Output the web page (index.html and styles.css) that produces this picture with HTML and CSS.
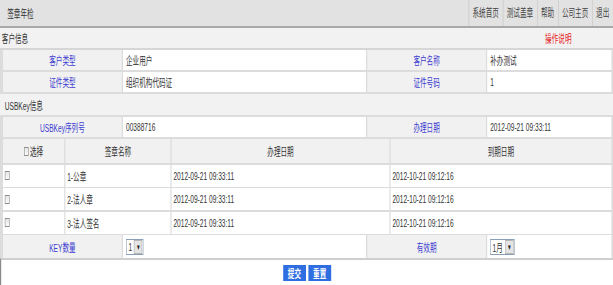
FILE: index.html
```html
<!DOCTYPE html>
<html lang="zh-CN">
<head>
  <meta charset="UTF-8">
  <meta name="viewport" content="width=device-width, initial-scale=1.0">
  <title>签章年检</title>
  <link rel="stylesheet" href="styles.css">
</head>
<body>
<div class="frame">
<div class="page">

  <div class="topbar">
    <div class="title">签章年检</div>
    <ul class="nav">
      <li>系统首页</li>
      <li>测试盖章</li>
      <li>帮助</li>
      <li>公司主页</li>
      <li>退出</li>
    </ul>
  </div>

  <div class="bar">
    <span>客户信息</span>
    <a class="help">操作说明</a>
  </div>

  <div class="form-grid">
    <div class="label">客户类型</div>
    <div class="value">企业用户</div>
    <div class="label">客户名称</div>
    <div class="value">补办测试</div>

    <div class="label">证件类型</div>
    <div class="value">组织机构代码证</div>
    <div class="label">证件号码</div>
    <div class="value">1</div>
  </div>

  <div class="bar sub">
    <span>USBKey信息</span>
  </div>

  <div class="form-grid single">
    <div class="label">USBKey序列号</div>
    <div class="value">00388716</div>
    <div class="label">办理日期</div>
    <div class="value">2012-09-21 09:33:11</div>
  </div>

  <div class="list">
    <div class="head"><input type="checkbox" class="chk"> 选择</div>
    <div class="head">签章名称</div>
    <div class="head">办理日期</div>
    <div class="head">到期日期</div>

    <div class="cell"><input type="checkbox" class="chk"></div>
    <div class="cell">1-公章</div>
    <div class="cell">2012-09-21 09:33:11</div>
    <div class="cell">2012-10-21 09:12:16</div>

    <div class="cell"><input type="checkbox" class="chk"></div>
    <div class="cell">2-法人章</div>
    <div class="cell">2012-09-21 09:33:11</div>
    <div class="cell">2012-10-21 09:12:16</div>

    <div class="cell"><input type="checkbox" class="chk"></div>
    <div class="cell">3-法人签名</div>
    <div class="cell">2012-09-21 09:33:11</div>
    <div class="cell">2012-10-21 09:12:16</div>
  </div>

  <div class="form-grid single tall">
    <div class="label">KEY数量</div>
    <div class="value"><span class="select num">1</span></div>
    <div class="label">有效期</div>
    <div class="value"><span class="select month">1月</span></div>
  </div>

  <div class="actions">
    <button class="btn">提交</button>
    <button class="btn">重置</button>
  </div>

</div>
</div>
</body>
</html>
```

FILE: styles.css
```css
html, body {
  margin: 0;
  padding: 0;
  background: #fff;
}

.frame {
  width: 613px;
  height: 285px;
  overflow: hidden;
}

.page {
  width: 1021.5px;
  transform: scaleX(0.6);
  transform-origin: 0 0;
  font-family: "Liberation Sans", "Noto Sans CJK SC", sans-serif;
  font-size: 11px;
  color: #333;
}

.topbar {
  height: 26px;
  background: #e2e2e2;
  border-bottom: 2px solid #a9a9a9;
  display: flex;
  justify-content: space-between;
  align-items: center;
}

.title {
  padding-left: 12px;
  color: #333;
}

.nav {
  list-style: none;
  margin: 0;
  padding: 0;
  display: flex;
  height: 26px;
}

.nav li {
  line-height: 26px;
  padding: 0 6px;
  border-left: 1px solid #c6c6c6;
  color: #444;
}

.bar {
  height: 20px;
  background: #f2f2f2;
  border-bottom: 2px solid #d6d6d6;
  display: flex;
  justify-content: space-between;
  align-items: center;
  padding: 0 3px;
}

.bar.sub {
  height: 21px;
  border-bottom: none;
  padding-left: 8px;
}

.help {
  color: #e41b1b;
  margin-right: 66px;
}

.form-grid {
  display: grid;
  grid-template-columns: 198px 405px 198px 1fr;
  grid-auto-rows: 20px;
  gap: 2px;
  padding: 0 3px 2px 5px;
  background: #dcdcdc;
}

.form-grid.single {
  padding-top: 2px;
}

.form-grid.tall {
  grid-auto-rows: 23px;
  padding-top: 1.5px;
  padding-bottom: 0;
}

.label {
  background: #f1f1f1;
  color: #3b3bd0;
  display: flex;
  align-items: center;
  justify-content: center;
}

.value {
  background: #fff;
  display: flex;
  align-items: center;
  padding-left: 5px;
}

.list {
  display: grid;
  grid-template-columns: 102px 175px 363px 1fr;
  grid-template-rows: 24px;
  grid-auto-rows: 22px;
  gap: 1.5px 2px;
  padding: 0 3px 0 5px;
  background: #dcdcdc;
}

.head {
  background: #f1f1f1;
  display: flex;
  align-items: center;
  justify-content: center;
  color: #333;
}

.cell {
  background: #fff;
  display: flex;
  align-items: center;
  padding-left: 3px;
}

.chk {
  appearance: none;
  width: 8px;
  height: 9px;
  margin: 0 2px 0 0;
  border: 1px solid #8f8f8f;
  background: linear-gradient(#e6e6e6, #fafafa);
}

.select {
  display: inline-flex;
  align-items: center;
  height: 14px;
  border: 1px solid #8aa0b8;
  background: #fff;
  padding-left: 3px;
}

.select::after {
  content: "▾";
  display: inline-flex;
  align-items: center;
  justify-content: center;
  width: 12px;
  height: 12px;
  margin: 0 1px 0 auto;
  background: #e4e4e4;
  border: 1px solid #b5b5b5;
  font-size: 9px;
  color: #222;
}

.select.num {
  width: 24px;
}

.select.month {
  width: 36px;
}

.actions {
  border-top: 2px solid #cfcfcf;
  border-left: 2px solid #8a8a8a;
  height: 20px;
  display: flex;
  justify-content: center;
  gap: 4px;
  padding-top: 5px;
}

.btn {
  height: 16px;
  width: 38px;
  padding: 0;
  border: none;
  background: #2f6ee0;
  color: #fff;
  font-family: inherit;
  font-size: 11px;
  font-weight: bold;
}
```
